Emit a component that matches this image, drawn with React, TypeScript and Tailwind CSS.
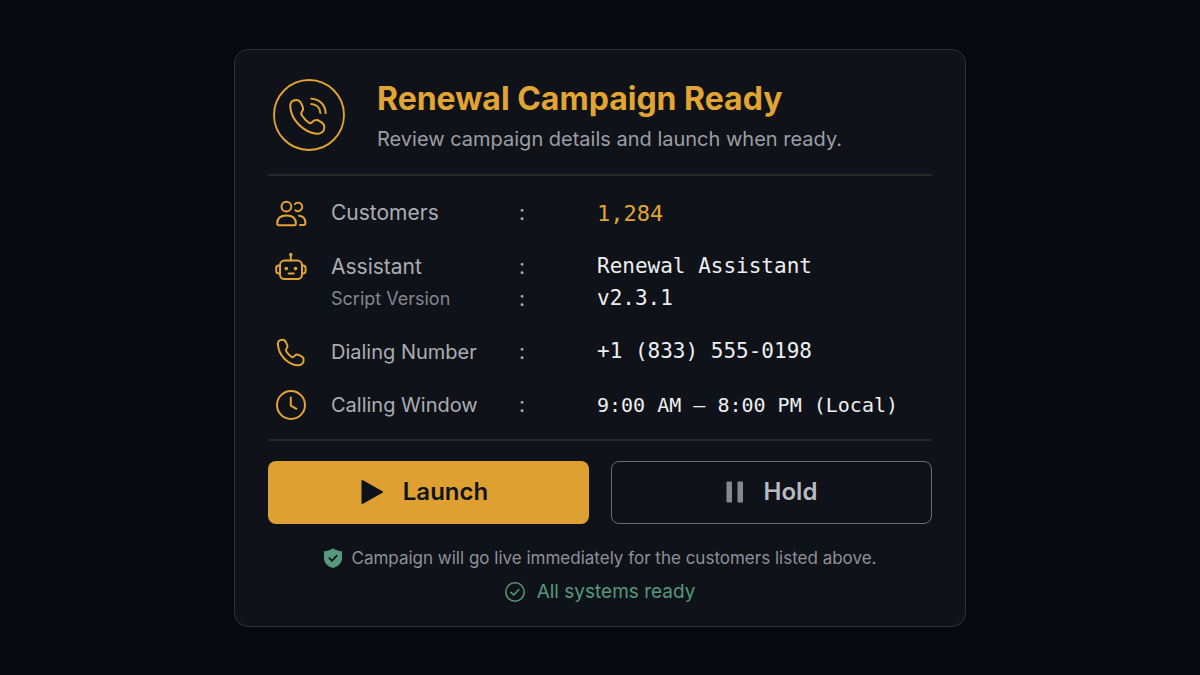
import type { ReactNode } from "react";

function CallIcon() {
    return (
        <svg viewBox="146 116 216 216" className="size-[72px] shrink-0" fill="none" stroke="currentColor" strokeWidth="5.5" strokeLinecap="round" aria-hidden="true">
            <circle cx="254" cy="224" r="105" />
            <path d="M198 201C196 187 203 179 216 179C224 179 228 183 231 190L236 202C238 208 235 211 232 215C229 219 231 223 234 227C240 236 247 243 255 248C259 250 262 248 265 244C270 238 275 238 282 240L292 246C298 250 300 255 300 261C300 274 290 281 276 280C238 276 201 239 198 201Z" strokeWidth="6" strokeLinejoin="round" />
            <path d="M261 175C286 176 303 194 304 219M261 191C277 192 287 203 288 218" strokeWidth="6" />
        </svg>
    );
}

function PeopleIcon() {
    return (
        <svg viewBox="0 0 32 32" className="size-8" fill="none" stroke="currentColor" strokeWidth="2" strokeLinecap="round" strokeLinejoin="round" aria-hidden="true">
            <circle cx="11.4" cy="9.6" r="4.9" />
            <path d="M2.2 26.6C2.2 21.6 5.6 18.6 11.5 18.6S20.9 21.6 20.9 26.6C20.9 27.6 20.2 28.2 19.3 28.2H3.8C2.9 28.2 2.2 27.6 2.2 26.6Z" />
            <path d="M19.9 7.1A4.2 4.2 0 1 1 20.3 13.2M24 18.7C28 19.1 30.4 22 30.4 26C30.4 27.3 29.7 28 28.5 28H25" />
        </svg>
    );
}

function RobotIcon() {
    return (
        <svg viewBox="0 0 32 32" className="size-8" fill="none" stroke="currentColor" strokeWidth="2" strokeLinecap="round" strokeLinejoin="round" aria-hidden="true">
            <rect x="5" y="9.6" width="22" height="18.4" rx="4.5" />
            <path d="M15.8 4.5V9.4M13.6 22.6H18.8M4.8 14.6H3.6C2.2 14.6 1.2 15.8 1.2 17.2V19.8C1.2 21.2 2.2 22.4 3.6 22.4H4.8M27.2 14.6H28.2C29.6 14.6 30.6 15.8 30.6 17.2V19.8C30.6 21.2 29.6 22.4 28.2 22.4H27.2" />
            <circle cx="15.8" cy="3.4" r="1.7" fill="currentColor" stroke="none" />
            <circle cx="11.3" cy="17.6" r="1.8" fill="currentColor" stroke="none" />
            <circle cx="20.5" cy="17.6" r="1.8" fill="currentColor" stroke="none" />
        </svg>
    );
}

function PhoneIcon() {
    return (
        <svg viewBox="45 30 96 96" className="size-8" fill="none" stroke="currentColor" strokeWidth="6" strokeLinejoin="round" aria-hidden="true">
            <path d="M54 58C52 47 57 41 67 41C73 41 76 44 78 49L82 58C84 63 82 66 79 69C77 72 78 75 80 78C84 84 89 89 95 93C98 95 101 93 103 90C107 85 112 85 117 87L126 92C130 94 131 98 131 102C131 112 123 118 113 118C83 115 57 88 54 58Z" />
        </svg>
    );
}

function ClockIcon() {
    return (
        <svg viewBox="0 0 32 32" className="size-8" fill="none" stroke="currentColor" strokeWidth="2" strokeLinecap="round" strokeLinejoin="round" aria-hidden="true">
            <circle cx="16" cy="16" r="14" />
            <path d="M15.8 8.4V16.6L21.4 19.8" />
        </svg>
    );
}

type RowProps = {
    icon?: ReactNode;
    label: string;
    labelClass: string;
    value: string;
    valueClass: string;
};

function Row({ icon, label, labelClass, value, valueClass }: RowProps) {
    return (
        <div className="flex min-h-8 items-center">
            <dt className={`flex w-[244px] shrink-0 items-center ${labelClass}`}>
                <span className="mr-6 size-8 shrink-0 text-[#e2a432]">{icon}</span>
                {label}
            </dt>
            <dd className="flex items-center">
                <span className="w-[78px] shrink-0 text-[21px] text-[#abadb3]">:</span>
                <span className={`font-['DejaVu_Sans_Mono',monospace] ${valueClass}`}>{value}</span>
            </dd>
        </div>
    );
}

export default function App() {
    return (
        <main className="flex min-h-screen items-center justify-center bg-[#08090e] font-['Inter',sans-serif]">
            <section className="w-full max-w-[732px] rounded-[14px] border border-[#303236] bg-[#0f1218] px-[33px] pt-[29px] pb-5">
                <header className="flex items-start gap-8 border-b-2 border-[#26282c] pb-[15px] pl-[5px]">
                    <span className="text-[#e2a432]">
                        <CallIcon />
                    </span>
                    <div>
                        <h1 className="text-[32px] leading-10 font-bold text-[#e2a432]">Renewal Campaign Ready</h1>
                        <p className="text-[20px] leading-10 text-[#9c9ea5]">Review campaign details and launch when ready.</p>
                    </div>
                </header>

                <dl className="flex flex-col gap-[21px] border-b-2 border-[#26282c] pt-[21px] pb-[18px] pl-[7px]">
                    <Row icon={<PeopleIcon />} label="Customers" labelClass="text-[21px] text-[#abadb3]" value="1,284" valueClass="text-[22px] text-[#e2a432]" />
                    <div>
                        <Row icon={<RobotIcon />} label="Assistant" labelClass="text-[21px] text-[#abadb3]" value="Renewal Assistant" valueClass="text-[21px] text-[#eeeff1]" />
                        <Row label="Script Version" labelClass="text-[18px] text-[#85878e]" value="v2.3.1" valueClass="text-[21px] text-[#eeeff1]" />
                    </div>
                    <Row icon={<PhoneIcon />} label="Dialing Number" labelClass="text-[20px] text-[#abadb3]" value="+1 (833) 555-0198" valueClass="text-[21px] text-[#eeeff1]" />
                    <Row icon={<ClockIcon />} label="Calling Window" labelClass="text-[20px] text-[#abadb3]" value="9:00 AM – 8:00 PM (Local)" valueClass="text-[20px] text-[#eeeff1]" />
                </dl>

                <div className="mt-5 grid grid-cols-2 gap-[22px]">
                    <button type="button" className="flex h-[63px] items-center justify-center gap-5 rounded-lg bg-[#dda031] pr-2 text-[24px] font-semibold text-[#0f1218]">
                        <svg viewBox="0 0 22 26" className="h-[26px] w-[22px]" fill="currentColor" stroke="currentColor" strokeWidth="2" strokeLinejoin="round" aria-hidden="true">
                            <path d="M1.5 2L21 13L1.5 24Z" />
                        </svg>
                        Launch
                    </button>
                    <button type="button" className="flex h-[63px] items-center justify-center gap-5 rounded-lg border border-[#6b6d71] text-[24px] font-semibold text-[#b9bbc1]">
                        <svg viewBox="0 0 18 22" className="h-[22px] w-[18px] text-[#868890]" fill="currentColor" aria-hidden="true">
                            <rect x="0.5" y="0.5" width="5.5" height="21" rx="1" />
                            <rect x="11.5" y="0.5" width="5.5" height="21" rx="1" />
                        </svg>
                        Hold
                    </button>
                </div>

                <p className="mt-5 flex items-center justify-center gap-2.5 text-[17px] leading-7 text-[#8f9198]">
                    <svg viewBox="0 0 18 20" className="h-5 w-[18px] shrink-0" aria-hidden="true">
                        <path d="M9 0.2C11.5 2 14.5 3 18 3.2V10C18 15 14.5 18.3 9 20C3.5 18.3 0 15 0 10V3.2C3.5 3 6.5 2 9 0.2Z" fill="#559a7c" />
                        <path d="M5.4 10.2L8 12.8L12.8 7.6" fill="none" stroke="#0f1218" strokeWidth="1.8" strokeLinecap="round" strokeLinejoin="round" />
                    </svg>
                    Campaign will go live immediately for the customers listed above.
                </p>
                <p className="mt-1.5 flex items-center justify-center gap-3 text-[19px] leading-7 text-[#559a7c]">
                    <svg viewBox="0 0 20 20" className="size-5 shrink-0" fill="none" stroke="currentColor" strokeWidth="1.5" strokeLinecap="round" strokeLinejoin="round" aria-hidden="true">
                        <circle cx="10" cy="10" r="9.2" />
                        <path d="M6 10.4L8.7 13L13.8 7.4" />
                    </svg>
                    All systems ready
                </p>
            </section>
        </main>
    );
}
